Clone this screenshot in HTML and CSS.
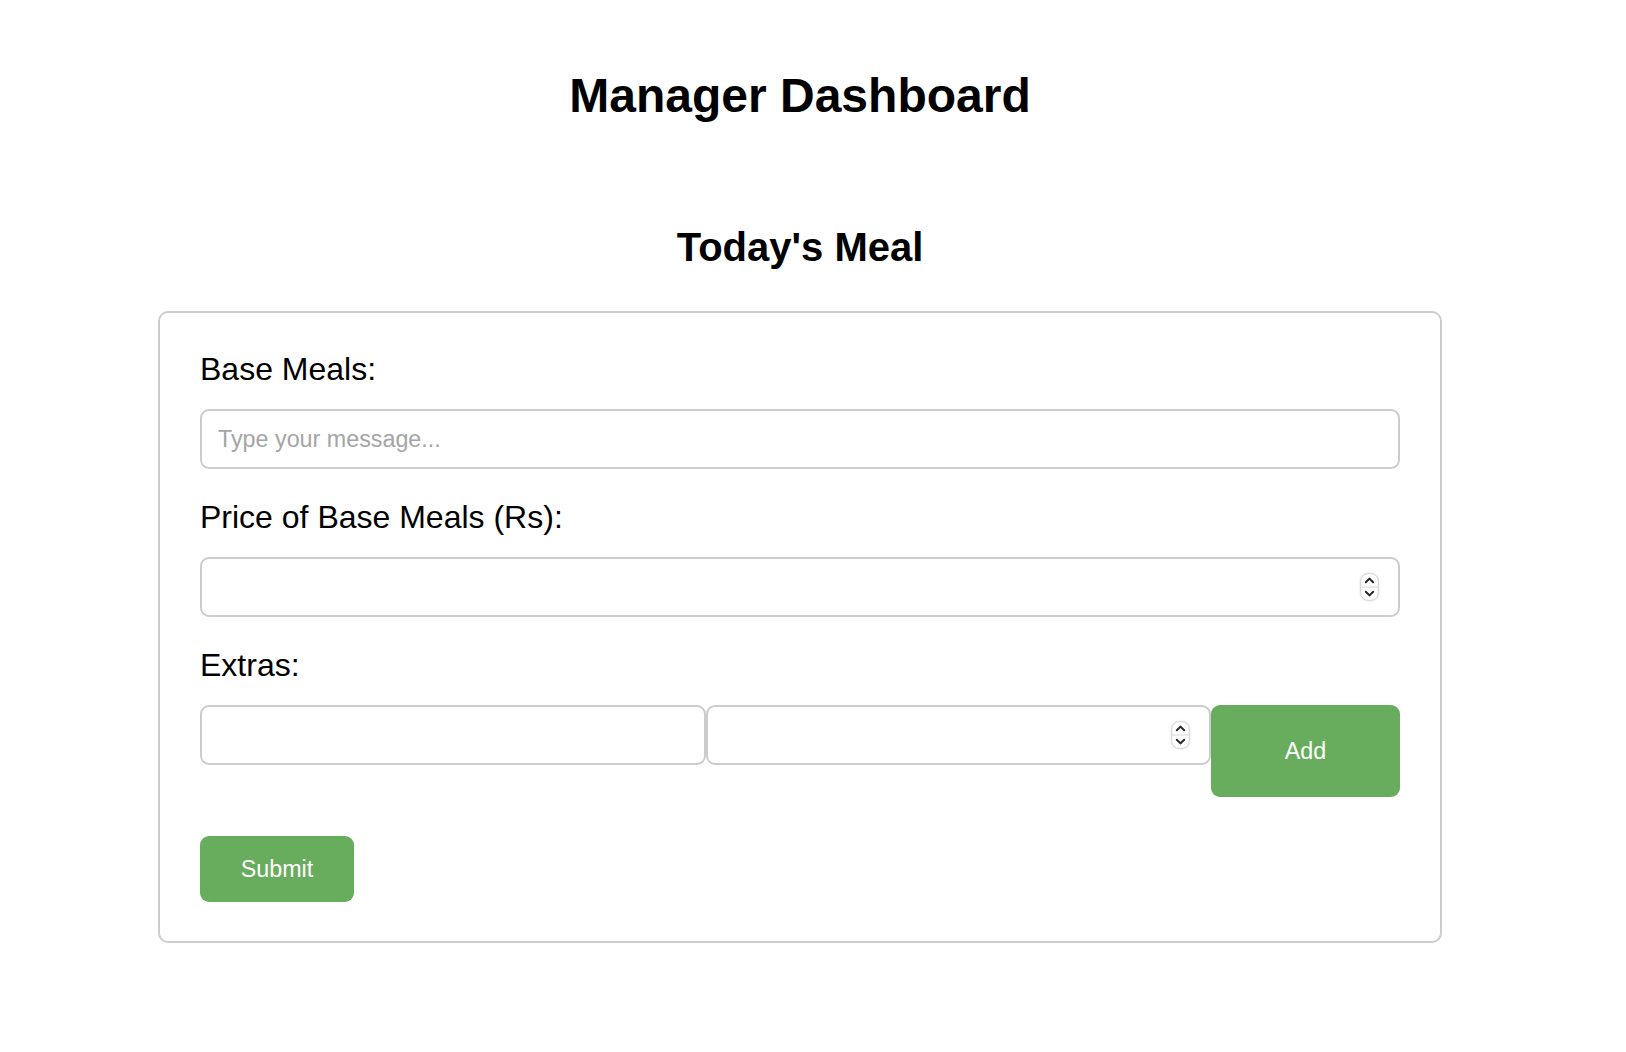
FILE: index.html
```html
<!DOCTYPE html>
<html lang="en">
<head>
<meta charset="utf-8">
<title>Manager Dashboard</title>
<link rel="stylesheet" href="styles.css">
</head>
<body>
<div class="page">
  <h1 class="title">Manager Dashboard</h1>
  <h2 class="subtitle">Today's Meal</h2>
  <form class="card">
    <label class="field-label" for="base">Base Meals:</label>
    <input class="field group-end" id="base" type="text" placeholder="Type your message...">

    <label class="field-label" for="price">Price of Base Meals (Rs):</label>
    <div class="num-wrap group-end">
      <input class="field num" id="price" type="number">
      <svg class="stepper" width="19" height="28" viewBox="0 0 19 28" aria-hidden="true">
        <rect x="0.75" y="0.75" width="17.5" height="26.5" rx="7" fill="#fff" stroke="#d4d4d4" stroke-width="1"/>
        <line x1="1" y1="14" x2="18" y2="14" stroke="#d8d8d8" stroke-width="1"/>
        <path d="M5.8 9.2 L9.5 5.6 L13.2 9.2" fill="none" stroke="#262626" stroke-width="2" stroke-linecap="round" stroke-linejoin="round"/>
        <path d="M5.8 18.8 L9.5 22.4 L13.2 18.8" fill="none" stroke="#262626" stroke-width="2" stroke-linecap="round" stroke-linejoin="round"/>
      </svg>
    </div>

    <label class="field-label" for="extra">Extras:</label>
    <div class="extras-row">
      <div class="extra-cell">
        <input class="field" id="extra" type="text">
      </div>
      <div class="extra-cell num-wrap">
        <input class="field num" type="number">
        <svg class="stepper" width="19" height="28" viewBox="0 0 19 28" aria-hidden="true">
          <rect x="0.75" y="0.75" width="17.5" height="26.5" rx="7" fill="#fff" stroke="#d4d4d4" stroke-width="1"/>
          <line x1="1" y1="14" x2="18" y2="14" stroke="#d8d8d8" stroke-width="1"/>
          <path d="M5.8 9.2 L9.5 5.6 L13.2 9.2" fill="none" stroke="#262626" stroke-width="2" stroke-linecap="round" stroke-linejoin="round"/>
          <path d="M5.8 18.8 L9.5 22.4 L13.2 18.8" fill="none" stroke="#262626" stroke-width="2" stroke-linecap="round" stroke-linejoin="round"/>
        </svg>
      </div>
      <button class="btn btn-add" type="button">Add</button>
    </div>

    <button class="btn btn-submit" type="submit">Submit</button>
  </form>
</div>
</body>
</html>
```

FILE: styles.css
```css
html, body {
  margin: 0;
  padding: 0;
  background: #ffffff;
}

body {
  font-family: "Liberation Sans", Arial, Helvetica, sans-serif;
  color: #000;
}

.page {
  width: 1600px;
}

.title {
  margin: 68px 0 0;
  font-size: 48px;
  line-height: 56px;
  font-weight: 700;
  text-align: center;
}

.subtitle {
  margin: 100px 0 0;
  font-size: 40px;
  line-height: 46px;
  font-weight: 700;
  text-align: center;
}

.card {
  width: 1200px;
  margin: 41px auto 0;
  padding: 40px 40px 39px;
  border: 2px solid #cccccc;
  border-radius: 10px;
  display: flex;
  flex-direction: column;
  align-items: stretch;
}

.field-label {
  display: block;
  font-size: 32px;
  line-height: 32px;
  margin-bottom: 24px;
}

.field {
  box-sizing: border-box;
  display: block;
  width: 100%;
  height: 60px;
  margin: 0;
  padding: 0 16px;
  border: 2px solid #cccccc;
  border-radius: 9px;
  background: #fff;
  font-family: "Liberation Sans", Arial, sans-serif;
  font-size: 23.3px;
  color: #000;
  outline: none;
}

.field::placeholder {
  color: #a5a5a5;
}

.num {
  -moz-appearance: textfield;
  appearance: textfield;
}

.num::-webkit-inner-spin-button,
.num::-webkit-outer-spin-button {
  -webkit-appearance: none;
  margin: 0;
}

.group-end {
  margin-bottom: 32px;
}

.num-wrap {
  position: relative;
}

.stepper {
  position: absolute;
  right: 21px;
  top: 16px;
  filter: drop-shadow(0 0.5px 0.8px rgba(0, 0, 0, 0.14));
}

.extras-row {
  display: flex;
  align-items: flex-start;
  margin-bottom: 39px;
}

.extra-cell {
  flex: 1 1 0;
  min-width: 0;
}

.btn {
  box-sizing: border-box;
  border: none;
  border-radius: 9px;
  background: #68ad5e;
  color: #ffffff;
  font-family: "Liberation Sans", Arial, sans-serif;
  font-size: 23.3px;
  line-height: 26px;
  cursor: pointer;
  margin: 0;
}

.btn-add {
  flex: 0 0 189px;
  width: 189px;
  height: 92px;
  padding: 0;
}

.btn-submit {
  align-self: flex-start;
  width: 154px;
  height: 66px;
  padding: 0;
}
```
